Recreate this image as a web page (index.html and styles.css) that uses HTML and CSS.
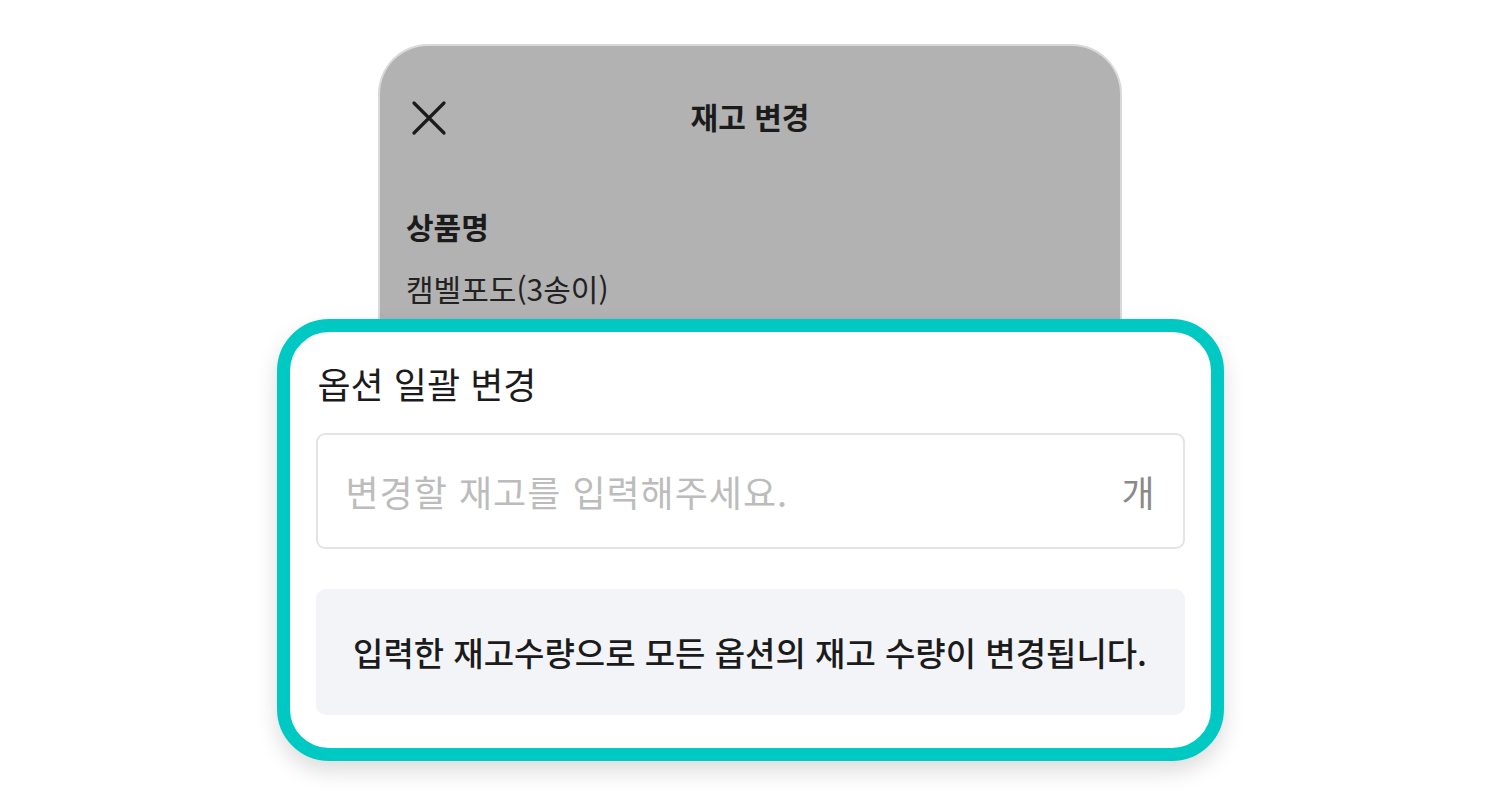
FILE: index.html
```html
<!DOCTYPE html>
<html lang="ko">
<head>
<meta charset="utf-8">
<title>재고 변경</title>
<link rel="stylesheet" href="styles.css">
</head>
<body>
<div class="stage">
  <section class="sheet">
    <header class="sheet-head">
      <button class="close" aria-label="닫기">
        <svg width="36" height="36" viewBox="0 0 36 36"><path d="M3 3 L33 33 M33 3 L3 33" stroke="#1b1b1b" stroke-width="3.2" stroke-linecap="round" fill="none"/></svg>
      </button>
      <h1 class="sheet-title">재고 변경</h1>
      <span></span>
    </header>
    <div class="field-label">상품명</div>
    <div class="field-value">캠벨포도(3송이)</div>
  </section>
  <section class="panel">
    <h2 class="panel-title">옵션 일괄 변경</h2>
    <label class="qty">
      <input class="qty-input" type="text" placeholder="변경할 재고를 입력해주세요.">
      <span class="qty-unit">개</span>
    </label>
    <p class="notice">입력한 재고수량으로 모든 옵션의 재고 수량이 변경됩니다.</p>
  </section>
</div>
</body>
</html>
```

FILE: styles.css
```css
* { box-sizing: border-box; }
html, body { margin: 0; padding: 0; background: #ffffff; }
body {
  font-family: "Noto Sans CJK KR", "Noto Sans", sans-serif;
  color: #1b1b1b;
  width: 1500px;
  height: 809px;
  overflow: hidden;
}
.stage {
  display: flex;
  flex-direction: column;
  align-items: center;
  padding-top: 44px;
}
.sheet {
  width: 744px;
  height: 330px;
  background: #b2b2b2;
  border: 2px solid #d9d9d9;
  border-bottom: none;
  border-radius: 50px 50px 0 0;
  padding: 40px 31px 0 26px;
}
.sheet-head {
  display: grid;
  grid-template-columns: 1fr auto 1fr;
  align-items: center;
  height: 64px;
  padding-left: 5px;
}
.close {
  width: 36px;
  height: 36px;
  padding: 0;
  border: none;
  background: none;
  display: flex;
}
.sheet-title {
  margin: 0 0 5px;
  font-size: 30px;
  font-weight: 700;
  line-height: 40px;
}
.field-label {
  margin-top: 56px;
  font-size: 30px;
  font-weight: 700;
  line-height: 40px;
}
.field-value {
  margin-top: 22px;
  font-size: 30px;
  font-weight: 400;
  line-height: 40px;
  color: #222;
}
.panel {
  width: 947px;
  margin-top: -55px;
  background: #ffffff;
  border: 13px solid #00c9c4;
  border-radius: 52px;
  padding: 29px 26px 33px;
  box-shadow: 0 10px 22px rgba(0, 0, 0, 0.14);
  position: relative;
}
.panel-title {
  margin: 0;
  font-size: 36px;
  font-weight: 400;
  line-height: 44px;
  color: #1b1b1b;
  padding-left: 2px;
}
.qty {
  margin-top: 28px;
  height: 116px;
  display: flex;
  align-items: center;
  border: 2px solid #e4e4e4;
  border-radius: 9px;
  padding: 0 28px;
}
.qty-input {
  flex: 1;
  border: none;
  outline: none;
  background: transparent;
  font-family: inherit;
  font-size: 36px;
  color: #1b1b1b;
  padding: 0;
  letter-spacing: 1px;
}
.qty-input::placeholder { color: #bcbcbc; }
.qty-unit {
  font-size: 36px;
  color: #8a8a8a;
}
.notice {
  margin: 40px 0 0;
  height: 126px;
  display: flex;
  align-items: center;
  justify-content: center;
  background: #f3f4f8;
  border-radius: 10px;
  font-size: 33px;
  font-weight: 500;
  color: #1b1b1b;
}
```
